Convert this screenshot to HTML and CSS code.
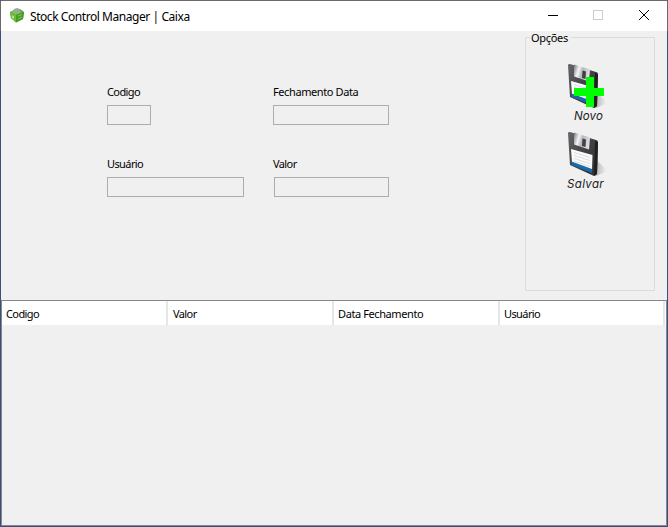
FILE: index.html
```html
<!DOCTYPE html>
<html lang="pt">
<head>
<meta charset="utf-8">
<title>Stock Control Manager | Caixa</title>
<link rel="stylesheet" href="styles.css">
</head>
<body>
<svg class="defs" width="0" height="0" aria-hidden="true">
  <defs>
    <linearGradient id="metal" x1="0" x2="1" y1="0" y2=".3"><stop offset="0" stop-color="#77777a"/><stop offset=".35" stop-color="#f5f5f7"/><stop offset=".6" stop-color="#b5b5ba"/><stop offset="1" stop-color="#dedee2"/></linearGradient>
    <linearGradient id="shell" x1="0" x2="1" y1="0" y2="1"><stop offset="0" stop-color="#66666a"/><stop offset=".5" stop-color="#414144"/><stop offset="1" stop-color="#303033"/></linearGradient>
    <linearGradient id="shade" x1="0" x2="1" y1="0" y2="0"><stop offset="0" stop-color="#999"/><stop offset="1" stop-color="#f0f0f0"/></linearGradient>
    <symbol id="disk" viewBox="0 0 40 46">
      <path d="M29 29 39 38 38 41 29 45 24 42Z" fill="url(#shade)"/>
      <path d="M1 2Q1 1 3 1L29 9Q31 9 31 12L30 43 27 45 3 34Z" fill="url(#shell)"/>
      <path d="M28 10 31 11 30 43 27 45Z" fill="#202023"/>
      <path d="M7 1.500 23 6.500 22 18.500 7 13.500Z" fill="url(#metal)"/>
      <path d="M15.500 7.500 19 8.500 18.500 16 15 15Z" fill="#414145"/>
      <path d="M4 18 25.500 24 25 39 5 31Z" fill="#fafafa"/>
      <path d="M4.500 30.500 25 38 25 42 5 34Z" fill="#176bac"/>
      <path d="M7 21.500 23 26.500M7 24.500 23 29.500M7 27.500 23 32.500M7 30 23 35.500" stroke="#c5d0d6" stroke-width=".7"/>
    </symbol>
  </defs>
</svg>
<div class="window">
  <header class="titlebar">
    <svg class="logo" width="16" height="16" viewBox="0 0 16 16">
      <path d="M1 5 5 3 11 2 15 5 14 12 7 15.5 2 11Z" fill="#4c9c25"/>
      <path d="M1 5 7 8 7 15.5 2 11Z" fill="#69bb34"/>
      <path d="M1 5 6 3.5 14 5 7 8Z" fill="#80be61"/>
      <path d="M4 5 5 2 8 1 11 2 12 5 9 6Z" fill="#9ca99a"/>
      <path d="M7 8 15 5 14 12 7 15.500Z" fill="#469d25"/>
      <path d="M3 8 5 9.5 5 12 3 10.5Z" fill="#b9e09e"/>
      <path d="M9 9 13 7.5M9 12 13 10" stroke="#7ccc4c"/>
    </svg>
    <h1 class="title">Stock Control Manager | Caixa</h1>
    <svg class="controls" width="102" height="11" viewBox="0 0 102 11" fill="none" shape-rendering="crispEdges">
      <path d="M0 5.5H10" stroke="#000"/>
      <path d="M45.500 .5h9v9h-9z" stroke="#ccc"/>
      <path d="M91 0 101 10M101 0 91 10" stroke="#000" shape-rendering="auto"/>
    </svg>
  </header>
  <main class="content">
    <section class="top">
      <form class="form">
        <label class="field"><span class="code">Codigo</span><input class="short" disabled></label>
        <label class="field"><span class="date">Fechamento Data</span><input class="medium" disabled></label>
        <label class="field"><span class="user">Usuário</span><input class="long" disabled></label>
        <label class="field"><span class="value">Valor</span><input class="amount" disabled></label>
      </form>
      <aside class="options">
        <h2 class="caption">Opções</h2>
        <div class="action">
          <svg class="icon" width="40" height="46" viewBox="0 0 40 46"><use href="#disk"/><path d="M19 14h8v11h10v8H27v11h-8V33H7v-8h12z" fill="#0f0"/></svg>
          <span class="novo">Novo</span>
        </div>
        <div class="action">
          <svg class="icon" width="40" height="46" viewBox="0 0 40 46"><use href="#disk"/></svg>
          <span class="salvar">Salvar</span>
        </div>
      </aside>
    </section>
    <section class="table">
      <div class="row">
        <div class="cell"><span class="code">Codigo</span></div>
        <div class="cell"><span class="value">Valor</span></div>
        <div class="cell"><span class="date">Data Fechamento</span></div>
        <div class="cell"><span class="user">Usuário</span></div>
      </div>
    </section>
  </main>
</div>
</body>
</html>
```
FILE: styles.css
```css
* { box-sizing: border-box; }
body { margin: 0; overflow: hidden; font: 11px/14px "Noto Sans", sans-serif; color: #000; }
.defs { display: block; }
h1, h2 { margin: 0; font-weight: 400; }
.window { width: 668px; height: 527px; display: flex; flex-direction: column; border: 1px solid #3d4f78; border-top-color: #6b696b; background: #f0f0f0; }
.titlebar { height: 30px; display: flex; align-items: flex-start; background: #fff; flex: none; margin: 0 -1px; padding: 0 17px 0 8px; border: solid #6b696b; border-width: 0 1px; }
.logo { margin-top: 6px; }
.title { margin: 7px 0 0 5px; font-size: 12px; line-height: 17px; white-space: nowrap; letter-spacing: -.44px; }
.controls { margin: 9px 0 0 auto; }
.content { flex: 1; display: flex; flex-direction: column; }
.top { height: 269px; display: flex; justify-content: space-between; padding: 6px 12px 0 106px; }
.form { display: grid; grid-template-columns: 166px 116px; grid-template-rows: 72px 72px; padding-top: 48px; }
.field { display: flex; flex-direction: column; }
.field span, .cell span { display: block; white-space: nowrap; }
.field span { height: 20px; }
.code { letter-spacing: -.6px; }
.date { letter-spacing: -.4px; }
.user { letter-spacing: -.6px; }
.value { letter-spacing: -.6px; }
input { height: 20px; padding: 0; border: 1px solid #abadb3; border-radius: 0; background: #f0f0f0; }
.short { width: 44px; }
.medium { width: 116px; }
.long { width: 137px; }
.amount { width: 115px; margin-left: 1px; }
.options { width: 130px; height: 254px; border: 1px solid #dcdcdc; display: flex; flex-direction: column; }
.caption { align-self: flex-start; margin: -7px 0 18px 4px; padding: 0 3px 0 1px; background: #f0f0f0; font-size: 11px; line-height: 14px; height: 14px; letter-spacing: -.3px; }
.action { width: 119px; height: 68px; display: flex; flex-direction: column; align-items: center; }
.icon { margin-left: 2px; display: block; flex: none; }
.action span { font: italic 400 11.5px/14px Inter, sans-serif; color: #222; letter-spacing: .15px; margin-left: 6px; }
.action .salvar { margin-left: 0; letter-spacing: .35px; }
.table { flex: 1; border: 1px solid #828790; }
.row { display: flex; height: 24px; background: #fff; }
.cell { width: 166px; padding: 6px 0 0 4px; border-right: 2px solid #e6e6e6; }
.cell:nth-child(2) { padding-left: 5px; }
.cell:last-child { width: 165px; }
```
